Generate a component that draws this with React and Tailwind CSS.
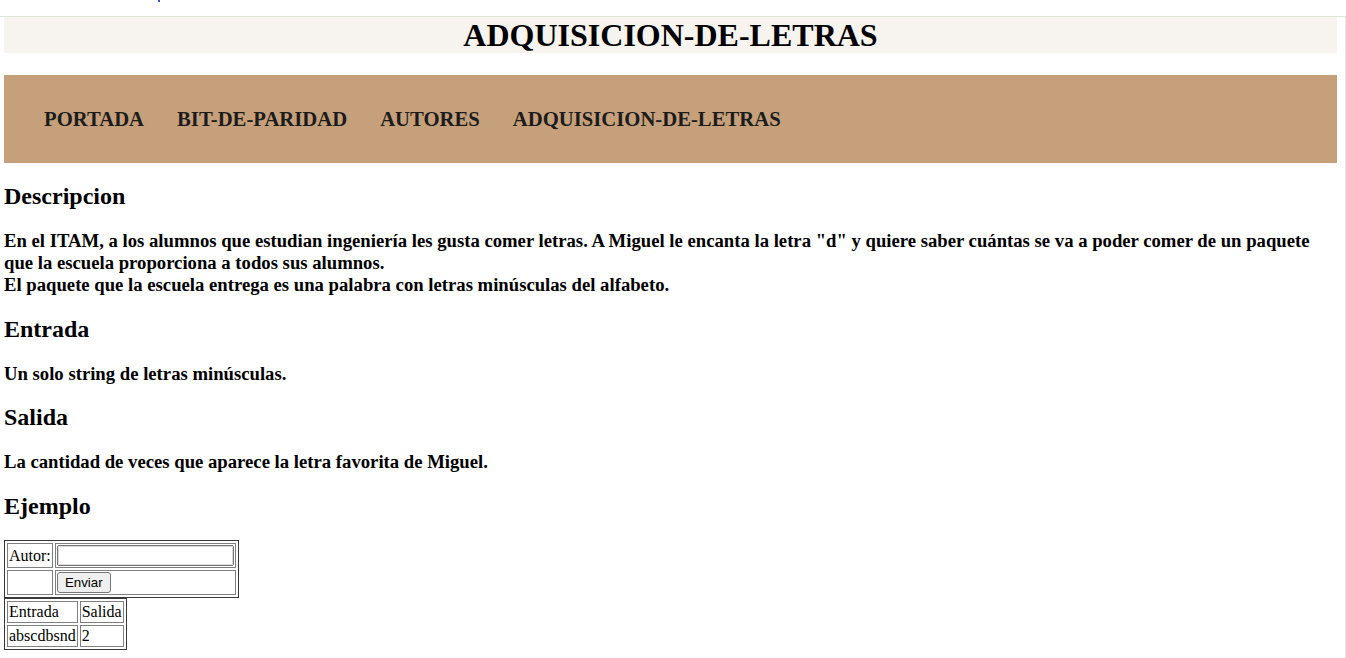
export default function App() {
  const navItems = ["PORTADA", "BIT-DE-PARIDAD", "AUTORES", "ADQUISICION-DE-LETRAS"];
  const cell = "border border-[#808080] p-[1px]";

  return (
    <div className="min-h-screen bg-white text-black" style={{ fontFamily: '"Liberation Serif", "Times New Roman", serif' }}>
      <div className="relative h-4">
        <span className="absolute left-[158px] top-0 h-[2px] w-[2px] bg-[#3b4fe0]" />
      </div>
      <div className="min-h-[642px] w-[1346px] border-t border-r border-t-[#dfe7d9] border-r-[#e6e6e6] pl-1 pr-2">
        <header className="h-[36px] bg-[#f7f4ef]">
          <h1 className="text-center text-[32px] font-bold leading-[36px]">ADQUISICION-DE-LETRAS</h1>
        </header>

        <nav className="mt-[22px] flex items-center gap-[33px] bg-[#c6a07a] py-8 pl-10">
          {navItems.map((item) => (
            <a key={item} href="#" className="text-[20.7px] font-bold leading-[24px] text-[#1c1c1c]">
              {item}
            </a>
          ))}
        </nav>

        <main>
          <h2 className="mt-[19px] mb-5 text-[24px] font-bold leading-[28px]">Descripcion</h2>
          <p className="mb-[19px] text-[18.7px] font-bold leading-[22px]">
            En el ITAM, a los alumnos que estudian ingeniería les gusta comer letras. A Miguel le encanta la letra "d" y quiere saber cuántas se va a poder comer de un paquete que la escuela proporciona a todos sus alumnos.
            <br />
            El paquete que la escuela entrega es una palabra con letras minúsculas del alfabeto.
          </p>

          <h2 className="mb-5 text-[24px] font-bold leading-[28px]">Entrada</h2>
          <p className="mb-[18px] text-[18.7px] font-bold leading-[22px]">Un solo string de letras minúsculas.</p>

          <h2 className="mb-5 text-[24px] font-bold leading-[28px]">Salida</h2>
          <p className="mb-[19px] text-[18.7px] font-bold leading-[22px]">La cantidad de veces que aparece la letra favorita de Miguel.</p>

          <h2 className="mb-5 text-[24px] font-bold leading-[28px]">Ejemplo</h2>

          <table className="border-separate border-spacing-[2px] border border-[#3a3a3a] text-[16px] leading-[18px]">
            <tbody>
              <tr>
                <td className={cell}>Autor:</td>
                <td className={cell}>
                  <input
                    type="text"
                    className="block h-[21px] w-[177px] rounded-[2px] border border-[#767676] bg-white px-[2px] text-[13px] outline outline-1 -outline-offset-2 outline-[#d9d9d9]"
                  />
                </td>
              </tr>
              <tr>
                <td className={cell}></td>
                <td className={cell}>
                  <button
                    type="button"
                    className="block h-[21px] w-[54px] rounded-[3px] border border-[#767676] bg-[#efefef] text-[13.33px] leading-[17px] text-black"
                    style={{ fontFamily: '"Liberation Sans", Arial, sans-serif' }}
                  >
                    Enviar
                  </button>
                </td>
              </tr>
            </tbody>
          </table>

          <table className="border-separate border-spacing-[2px] border border-[#3a3a3a] text-[16px] leading-[18px]">
            <tbody>
              <tr>
                <td className={cell}>Entrada</td>
                <td className={cell}>Salida</td>
              </tr>
              <tr>
                <td className={cell}>abscdbsnd</td>
                <td className={cell}>2</td>
              </tr>
            </tbody>
          </table>
        </main>
      </div>
    </div>
  );
}
